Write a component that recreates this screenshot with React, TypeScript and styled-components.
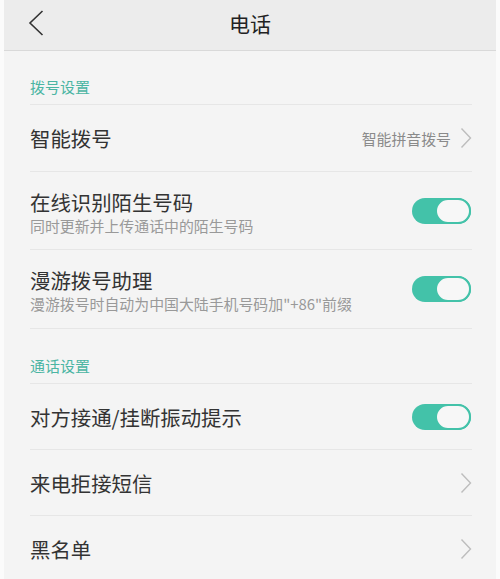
import styled, { createGlobalStyle } from 'styled-components';

const GlobalStyle = createGlobalStyle`
  html, body {
    margin: 0;
    padding: 0;
    background: #fbfbfb;
  }
  body {
    font-family: "Noto Sans CJK SC", "Noto Sans", sans-serif;
  }
`;

const TEAL = '#43c2a9';

type ToggleProps = { on?: boolean };

function Toggle({ on = true }: ToggleProps) {
  return (
    <Switch $on={on}>
      <Knob $on={on} />
    </Switch>
  );
}

function Chevron() {
  return (
    <svg width="12" height="22" viewBox="0 0 12 22">
      <path d="M1.5 1.5 L10.5 11 L1.5 20.5" fill="none" stroke="#bdbdbd" strokeWidth="1.4" />
    </svg>
  );
}

export default function App() {
  return (
    <>
      <GlobalStyle />
      <Screen>
        <Header>
          <Back>
            <svg width="16" height="26" viewBox="0 0 16 26">
              <path d="M14.5 1 L2 13 L14.5 25" fill="none" stroke="#333" strokeWidth="1.6" />
            </svg>
          </Back>
          <HeaderTitle>电话</HeaderTitle>
        </Header>

        <SectionLabel $h={54}>拨号设置</SectionLabel>
        <Row $h={67}>
          <Title>智能拨号</Title>
          <Trail>
            <Value>智能拼音拨号</Value>
            <Chevron />
          </Trail>
        </Row>
        <Row $h={78}>
          <Texts>
            <Title>在线识别陌生号码</Title>
            <Sub>同时更新并上传通话中的陌生号码</Sub>
          </Texts>
          <Toggle />
        </Row>
        <Row $h={79}>
          <Texts>
            <Title>漫游拨号助理</Title>
            <Sub>漫游拨号时自动为中国大陆手机号码加"+86"前缀</Sub>
          </Texts>
          <Toggle />
        </Row>

        <SectionLabel $h={55}>通话设置</SectionLabel>
        <Row $h={66}>
          <Title>对方接通/挂断振动提示</Title>
          <Toggle />
        </Row>
        <Row $h={66}>
          <Title>来电拒接短信</Title>
          <Chevron />
        </Row>
        <Row $h={66}>
          <Title>黑名单</Title>
          <Chevron />
        </Row>
      </Screen>
    </>
  );
}

const Screen = styled.div`
  margin: 0 4px 0 4px;
  background: #f4f4f4;
  height: 579px;
  overflow: hidden;
`;

const Header = styled.div`
  position: relative;
  height: 50px;
  background: #ececec;
  border-bottom: 1px solid #d9d9d9;
  display: flex;
  align-items: center;
  justify-content: center;
`;

const Back = styled.div`
  position: absolute;
  left: 24px;
  top: 10px;
  display: flex;
`;

const HeaderTitle = styled.div`
  font-size: 21px;
  color: #222;
  margin-top: -4px;
`;

const SectionLabel = styled.div<{ $h: number }>`
  height: ${(p) => p.$h}px;
  margin: 0 24px 0 26px;
  border-bottom: 1px solid #e6e6e6;
  display: flex;
  align-items: flex-end;
  padding-bottom: 7px;
  box-sizing: border-box;
  font-size: 15px;
  color: #4bb5a3;
`;

const Row = styled.div<{ $h: number }>`
  height: ${(p) => p.$h}px;
  margin: 0 24px 0 26px;
  border-bottom: 1px solid #e6e6e6;
  box-sizing: border-box;
  display: flex;
  align-items: center;
  justify-content: space-between;
`;

const Texts = styled.div`
  display: flex;
  flex-direction: column;
  margin-top: 2px;
`;

const Title = styled.div`
  font-size: 20.4px;
  color: #333;
  line-height: 28px;
`;

const Sub = styled.div`
  font-size: 14.9px;
  color: #999;
  line-height: 20px;
`;

const Trail = styled.div`
  display: flex;
  align-items: center;
  gap: 9px;
`;

const Value = styled.div`
  font-size: 14.9px;
  color: #8a8a8a;
`;

const Switch = styled.div<{ $on: boolean }>`
  position: relative;
  width: 59px;
  height: 26px;
  border-radius: 13px;
  background: ${(p) => (p.$on ? TEAL : '#ddd')};
  margin-right: 1px;
`;

const Knob = styled.div<{ $on: boolean }>`
  position: absolute;
  top: 0;
  ${(p) => (p.$on ? 'right: 0;' : 'left: 0;')}
  width: 36px;
  height: 26px;
  box-sizing: border-box;
  border-radius: 13px;
  background: #f7f7f7;
  border: 2px solid ${TEAL};
`;
